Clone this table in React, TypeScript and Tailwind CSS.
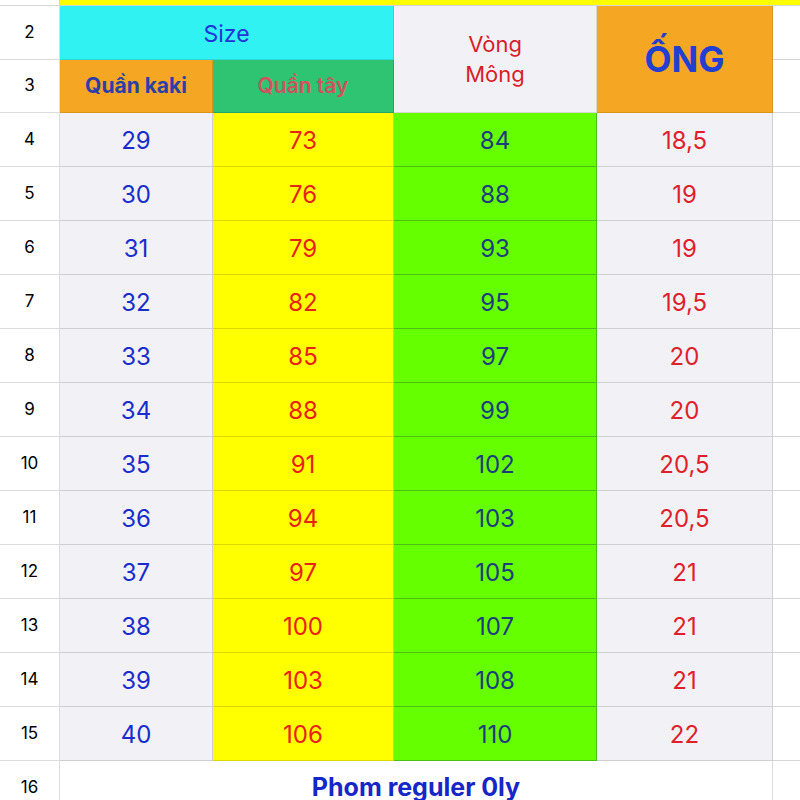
import React from "react"

const rows = [
  ["29", "73", "84", "18,5"],
  ["30", "76", "88", "19"],
  ["31", "79", "93", "19"],
  ["32", "82", "95", "19,5"],
  ["33", "85", "97", "20"],
  ["34", "88", "99", "20"],
  ["35", "91", "102", "20,5"],
  ["36", "94", "103", "20,5"],
  ["37", "97", "105", "21"],
  ["38", "100", "107", "21"],
  ["39", "103", "108", "21"],
  ["40", "106", "110", "22"],
]

const cell = "flex items-center justify-center border-b border-r"

export default function App() {
  return (
    <div className="w-[800px] h-[800px] overflow-hidden bg-white" style={{ fontFamily: "Inter, 'Liberation Sans', sans-serif" }}>
      <div className="grid grid-cols-[60px_153px_181px_203px_176px_27px] grid-rows-[6px_54px_53px_repeat(13,54px)]">
        {/* row 1 strip */}
        <div className="border-b border-r border-[#d6d6d6] bg-white" />
        <div className="col-span-5 border-b border-[#d6d6d6] bg-[#ffff00]" />

        {/* row 2 */}
        <div className={`${cell} border-[#dcdcdc] text-[17px] text-black`}>2</div>
        <div className={`${cell} col-span-2 pt-1 border-[#2bd9d9] bg-[#30f2f2] text-[23px] text-[#2136d6]`}>Size</div>
        <div className={`${cell} row-span-2 flex-col border-[#d6d6d6] bg-[#f2f2f6] text-[22px] leading-[30px] text-[#d81e2b]`}>
          <span>Vòng</span>
          <span>Mông</span>
        </div>
        <div className={`${cell} row-span-2 border-[#d8941f] bg-[#f5a623] text-[35px] font-bold text-[#2140d2]`}>ỐNG</div>
        <div className="border-b border-[#d6d6d6]" />

        {/* row 3 */}
        <div className={`${cell} border-[#dcdcdc] text-[17px] text-black`}>3</div>
        <div className={`${cell} border-[#d8941f] bg-[#f5a623] text-[21px] font-bold text-[#2a3fa8]`}>Quần kaki</div>
        <div className={`${cell} border-[#26a862] bg-[#2ec472] text-[21px] font-semibold text-[#d4505e]`}>Quần tây</div>
        <div className="border-b border-[#d6d6d6]" />

        {rows.map((r, i) => (
          <React.Fragment key={i}>
            <div className={`${cell} border-[#dcdcdc] text-[17px] text-black`}>{i + 4}</div>
            <div className={`${cell} pt-0.5 border-[#cfcfd3] bg-[#f2f2f6] text-[24px] text-[#1a2ccc]`}>{r[0]}</div>
            <div className={`${cell} pt-0.5 border-[#d9d900] bg-[#ffff00] text-[24px] text-[#e8221a]`}>{r[1]}</div>
            <div className={`${cell} pt-0.5 border-[#4bbf1a] bg-[#66ff00] text-[24px] text-[#1d3c80]`}>{r[2]}</div>
            <div className={`${cell} pt-0.5 border-[#d0d0d4] bg-[#f2f2f6] text-[24px] text-[#df1f2c]`}>{r[3]}</div>
            <div className="border-b border-[#d6d6d6]" />
          </React.Fragment>
        ))}

        {/* row 16 */}
        <div className={`${cell} border-[#dcdcdc] text-[17px] text-black`}>16</div>
        <div className={`${cell} col-span-4 border-[#dcdcdc] text-[25px] font-bold text-[#1626c8]`}>Phom reguler 0ly</div>
        <div className="border-b border-[#d6d6d6]" />
      </div>
    </div>
  )
}
